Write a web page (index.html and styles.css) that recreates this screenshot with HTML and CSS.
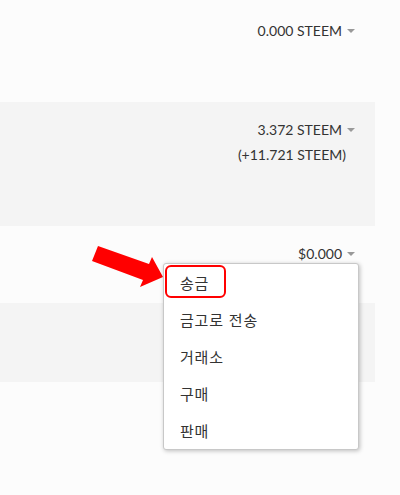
FILE: index.html
```html
<!DOCTYPE html>
<html lang="ko">
<head>
    <meta charset="UTF-8">
    <meta name="viewport" content="width=device-width, initial-scale=1.0">
    <title>Wallet</title>
    <link rel="stylesheet" href="styles.css">
</head>
<body>
    <div class="balances">
        <div class="row row-first">
            <div class="value"><span class="amount">0.000 STEEM</span><span class="caret"></span></div>
        </div>
        <div class="row row-alt row-power">
            <div class="value"><span class="amount">3.372 STEEM</span><span class="caret"></span></div>
            <div class="delegated">(+11.721 STEEM)</div>
        </div>
        <div class="row row-dollar">
            <div class="value dropdown">
                <span class="amount">$0.000</span><span class="caret"></span>
                <ul class="menu">
                    <li class="menu-item picked">송금</li>
                    <li class="menu-item">금고로 전송</li>
                    <li class="menu-item">거래소</li>
                    <li class="menu-item">구매</li>
                    <li class="menu-item">판매</li>
                </ul>
            </div>
        </div>
        <div class="row row-alt row-savings"></div>
        <div class="row row-last"></div>
    </div>

    <svg class="pointer" width="80" height="50" viewBox="88 240 80 50">
        <polygon points="98,246 149,264 152,257 163,277 140,287 143,280 92,261" fill="#ff0000"/>
    </svg>
</body>
</html>
```

FILE: styles.css
```css
body {
    margin: 0;
    background-color: #fcfcfc;
    font-family: Lato, "Noto Sans CJK KR", sans-serif;
    color: #333;
    font-size: 14px;
}
.balances {
    width: 375px;
}
.row {
    padding: 18px 20px 0 0;
    box-sizing: border-box;
    display: flex;
    flex-direction: column;
    align-items: flex-end;
}
.row-alt {
    background-color: #f4f4f4;
}
.row-first {
    height: 102px;
    padding-top: 21px;
}
.row-power {
    height: 124px;
}
.row-dollar {
    height: 77px;
}
.row-savings {
    height: 79px;
}
.row-last {
    height: 113px;
}
.value {
    line-height: 20px;
    display: flex;
    align-items: center;
}
.caret {
    width: 0;
    height: 0;
    margin-left: 5px;
    border-left: 4px solid transparent;
    border-right: 4px solid transparent;
    border-top: 4px solid #999;
}
.delegated {
    line-height: 20px;
    margin-top: 5px;
    padding-right: 9px;
}
.dropdown {
    position: relative;
}
.menu {
    position: absolute;
    top: 19px;
    right: -4px;
    width: 194px;
    margin: 0;
    padding: 0;
    list-style: none;
    background-color: #fff;
    border: 1px solid #c8c8c8;
    border-radius: 3px;
    box-shadow: 1px 1px 4px rgba(0, 0, 0, 0.25);
    z-index: 5;
}
.menu-item {
    font-family: "Noto Sans CJK KR", sans-serif;
    font-size: 15px;
    letter-spacing: 0.8px;
    line-height: 37px;
    padding-left: 16px;
    color: #333;
}
.picked {
    position: relative;
}
.picked::after {
    content: "";
    position: absolute;
    left: 1px;
    top: 1px;
    width: 57px;
    height: 29px;
    border: 2px solid #ff0000;
    border-radius: 6px;
}
.pointer {
    position: absolute;
    left: 88px;
    top: 240px;
}
```
